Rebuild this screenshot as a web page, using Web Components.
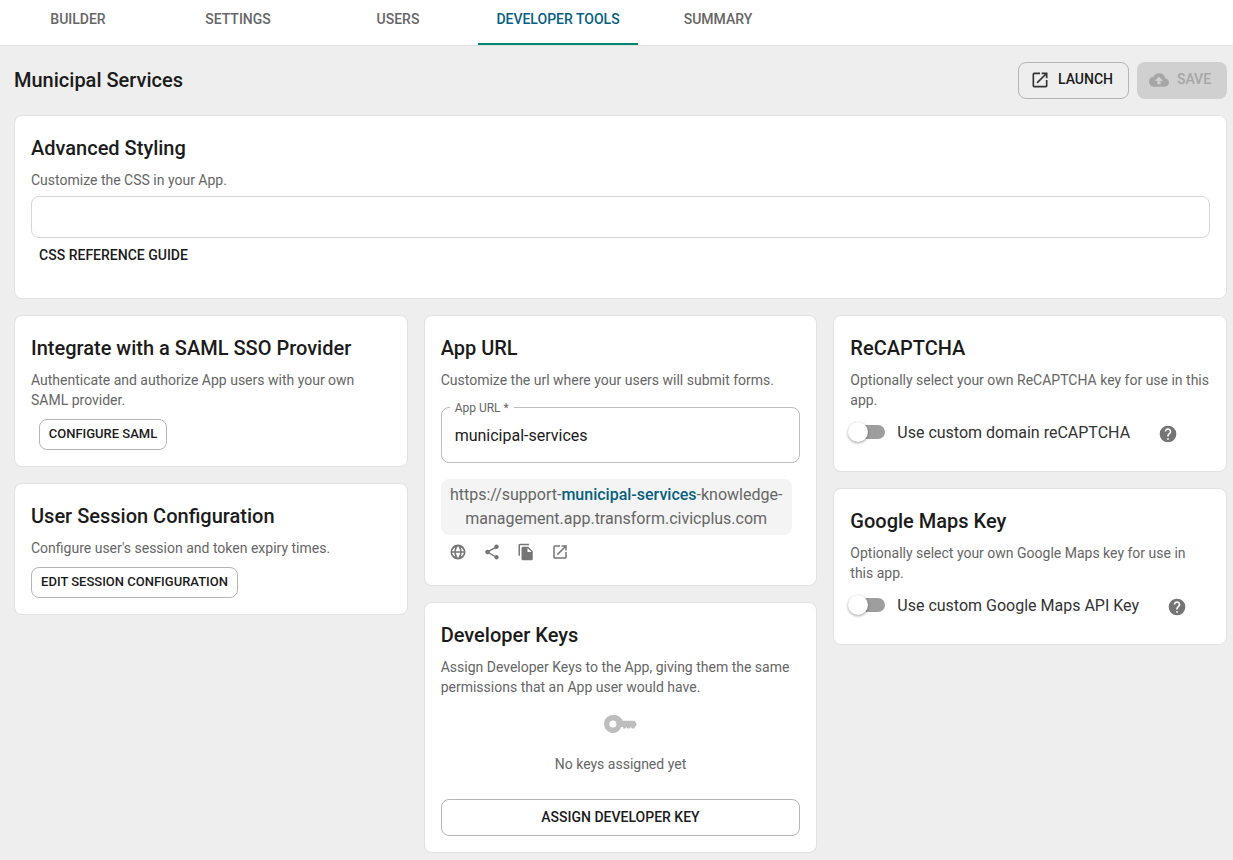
<!DOCTYPE html>
<html lang="en"><head><meta charset="utf-8"><title>Developer Tools</title>
<style>
html,body{margin:0;padding:0;height:860px;overflow:hidden;background:#eee;font-family:Roboto,"Liberation Sans",sans-serif;color:#1b1b1b}
</style></head><body>
<app-tabs>
  <app-tab>BUILDER</app-tab><app-tab>SETTINGS</app-tab><app-tab>USERS</app-tab><app-tab active>DEVELOPER TOOLS</app-tab><app-tab>SUMMARY</app-tab>
</app-tabs>
<app-page>
  <span slot="title">Municipal Services</span>
  <app-button slot="actions" outline icon="launch" style="width:111px;height:37px">LAUNCH</app-button>
  <app-button slot="actions" disabled icon="cloud" style="width:90px;height:37px">SAVE</app-button>

  <app-card slot="top" style="height:184px" heading="Advanced Styling" desc="Customize the CSS in your App.">
    <css-box></css-box>
    <app-button flat style="margin-left:8px;width:149px;height:34px">CSS REFERENCE GUIDE</app-button>
  </app-card>

  <div slot="col1">
    <app-card style="height:152px" heading="Integrate with a SAML SSO Provider">
      <span slot="desc">Authenticate and authorize App users with your own SAML provider.</span>
      <app-button outline small style="margin:9px 0 0 8px;width:128px;height:31px">CONFIGURE SAML</app-button>
    </app-card>
    <app-card style="height:132px" heading="User Session Configuration" desc="Configure user's session and token expiry times.">
      <app-button outline small style="margin-top:9px;width:207px;height:31px">EDIT SESSION CONFIGURATION</app-button>
    </app-card>
  </div>
  <div slot="col2">
    <app-card style="height:271px" heading="App URL" desc="Customize the url where your users will submit forms.">
      <url-field label="App URL *" value="municipal-services"></url-field>
      <url-preview><b>municipal-services</b></url-preview>
    </app-card>
    <app-card style="height:251px" heading="Developer Keys">
      <span slot="desc">Assign Developer Keys to the App, giving them the same permissions that an App user would have.</span>
      <keys-empty>No keys assigned yet</keys-empty>
      <app-button outline style="width:100%;height:37px;display:flex">ASSIGN DEVELOPER KEY</app-button>
    </app-card>
  </div>
  <div slot="col3">
    <app-card style="height:157px" heading="ReCAPTCHA">
      <span slot="desc">Optionally select your own ReCAPTCHA key for use in this app.</span>
      <app-toggle>Use custom domain reCAPTCHA</app-toggle>
    </app-card>
    <app-card style="height:157px" heading="Google Maps Key">
      <span slot="desc">Optionally select your own Google Maps key for use in this app.</span>
      <app-toggle>Use custom Google Maps API Key</app-toggle>
    </app-card>
  </div>
</app-page>
<script>
const ICONS={
 launch:'<path d="M19 19H5V5h7V3H5a2 2 0 0 0-2 2v14a2 2 0 0 0 2 2h14c1.1 0 2-.9 2-2v-7h-2v7zM14 3v2h3.59l-9.83 9.83 1.41 1.41L19 6.41V10h2V3h-7z"/>',
 cloud:'<path d="M19.35 10.04A7.49 7.49 0 0 0 12 4C9.11 4 6.6 5.64 5.35 8.04A5.994 5.994 0 0 0 0 14c0 3.31 2.69 6 6 6h13c2.76 0 5-2.24 5-5 0-2.64-2.05-4.78-4.65-4.96zM14 13v4h-4v-4H7l5-5 5 5h-3z"/>',
 globe:'<path d="M12 2a10 10 0 1 0 0 20 10 10 0 0 0 0-20zm7.93 9h-3.05a15.7 15.7 0 0 0-1.3-5.46A8.03 8.03 0 0 1 19.93 11zM12 4.04c.95 1.3 2.44 3.9 2.87 6.96H9.13C9.56 7.94 11.05 5.34 12 4.04zM4.07 13h3.05c.1 1.95.55 3.8 1.3 5.46A8.03 8.03 0 0 1 4.07 13zm3.05-2H4.07a8.03 8.03 0 0 1 4.35-5.46A15.7 15.7 0 0 0 7.12 11zM12 19.96c-.95-1.3-2.44-3.9-2.87-6.96h5.74c-.43 3.06-1.92 5.66-2.87 6.96zM15.58 18.46c.75-1.66 1.2-3.51 1.3-5.46h3.05a8.03 8.03 0 0 1-4.35 5.46z"/>',
 share:'<path d="M18 16.08c-.76 0-1.44.3-1.96.77L8.91 12.7c.05-.23.09-.46.09-.7s-.04-.47-.09-.7l7.05-4.11c.54.5 1.25.81 2.04.81 1.66 0 3-1.34 3-3s-1.34-3-3-3-3 1.34-3 3c0 .24.04.47.09.7L8.04 9.81C7.5 9.31 6.79 9 6 9c-1.66 0-3 1.34-3 3s1.34 3 3 3c.79 0 1.5-.31 2.04-.81l7.12 4.16c-.05.21-.08.43-.08.65 0 1.61 1.31 2.92 2.92 2.92s2.92-1.31 2.92-2.92-1.31-2.92-2.92-2.92z"/>',
 copy:'<path d="M16 1H4a2 2 0 0 0-2 2v14h2V3h12V1zm-1 4 6 6v10a2 2 0 0 1-2 2H8a2 2 0 0 1-2-2V7a2 2 0 0 1 2-2h7zm-1 7h5.5L14 6.5V12z" />',
 key:'<path fill-rule="evenodd" d="M7 5.7a6.3 6.3 0 1 0 5.9 8.5h1.3v1h1.6l.7-1 .8 1h1.5l.8-1 .8 1h1.6l1.9-3-1.6-2.5h-8.4A6.3 6.3 0 0 0 7 5.7zm0 3.8a2.5 2.5 0 1 1 0 5 2.5 2.5 0 0 1 0-5z"/>',
 help:'<path d="M12 2a10 10 0 1 0 0 20 10 10 0 0 0 0-20zm1 17h-2v-2h2v2zm2.07-7.75-.9.92C13.45 12.9 13 13.5 13 15h-2v-.5c0-1.1.45-2.1 1.17-2.83l1.24-1.26c.37-.36.59-.86.59-1.41 0-1.1-.9-2-2-2s-2 .9-2 2H8c0-2.21 1.79-4 4-4s4 1.79 4 4c0 .88-.36 1.68-.93 2.25z"/>'
};
const svg=(n,s,c)=>`<svg width="${s}" height="${s}" viewBox="0 0 24 24" fill="${c}" aria-hidden="true">${ICONS[n]}</svg>`;
class Base extends HTMLElement{
 constructor(){super();this.attachShadow({mode:'open'})}
 connectedCallback(){this.shadowRoot.innerHTML=this.render()}
}
customElements.define('app-tabs',class extends Base{render(){return `<style>:host{display:block;height:45px;box-sizing:border-box;background:#fff;box-shadow:0 1px 0 #e0e0e0}
.in{display:flex;margin-left:-2px}</style><div class="in"><slot></slot></div>`}});
customElements.define('app-tab',class extends Base{render(){const a=this.hasAttribute('active');return `<style>:host{display:flex;flex:none;width:160px;height:45px;box-sizing:border-box;align-items:center;justify-content:center;padding-bottom:6px;font:500 14px Roboto,sans-serif;color:${a?'#06607f':'#666'};border-bottom:2px solid ${a?'#00876f':'transparent'}}</style><slot></slot>`}});
customElements.define('app-page',class extends Base{render(){return `<style>:host{display:block;padding:0 6px 0 14px}
.head{display:flex;justify-content:space-between;align-items:center;height:70px}
.t{font:500 20px Roboto,sans-serif;color:#1b1b1b}
.acts{display:flex;gap:8px}
.grid{display:grid;grid-template-columns:repeat(3,1fr);gap:16px;margin-top:16px;align-items:start}
::slotted([slot^=col]){display:flex;flex-direction:column;gap:16px}
</style><div class="head"><div class="t"><slot name="title"></slot></div><div class="acts"><slot name="actions"></slot></div></div>
<slot name="top"></slot>
<div class="grid"><slot name="col1"></slot><slot name="col2"></slot><slot name="col3"></slot></div>`}});
customElements.define('app-card',class extends Base{render(){return `<style>:host{display:block;box-sizing:border-box;background:#fff;border:1px solid #e2e2e2;border-radius:8px;padding:20px 16px 0}
h2{margin:0;font:500 20px/24px Roboto,sans-serif;color:#1b1b1b}
.d{margin-top:10px;font:14px/20px Roboto,sans-serif;color:#666}
</style><h2>${this.getAttribute('heading')}</h2><div class="d">${this.getAttribute('desc')||''}<slot name="desc"></slot></div><slot></slot>`}});
customElements.define('app-button',class extends Base{render(){const o=this.hasAttribute('outline'),d=this.hasAttribute('disabled'),i=this.getAttribute('icon'),f=this.hasAttribute('flat');
return `<style>:host{display:inline-flex;box-sizing:border-box;align-items:center;justify-content:center;gap:8px;border-radius:8px;font:500 ${this.hasAttribute('small')?13:14}px Roboto,sans-serif;color:${d?'#a6a6a6':'#1b1b1b'};white-space:nowrap;${o?'border:1px solid #b5b5b5;':''}${d?'background:#d0d0d0;':''}${i?'padding-right:4px;':''}}
svg{display:block;flex:none}.x{display:block;margin-bottom:${f?0:2}px}</style>${i?svg(i,20,d?'#a6a6a6':'#333'):''}<span class="x"><slot></slot></span>`}});
customElements.define('css-box',class extends Base{render(){return `<style>:host{display:block;box-sizing:border-box;height:42px;margin-top:6px;border:1px solid #d5d5d5;border-radius:8px}</style>`}});
customElements.define('url-field',class extends Base{render(){return `<style>:host{position:relative;box-sizing:border-box;height:56px;margin-top:17px;border:1px solid #bdbdbd;border-radius:8px;padding:0 13px;display:flex;align-items:center;font:16px Roboto,sans-serif;color:#1b1b1b}
.l{position:absolute;left:8px;top:-7px;background:#fff;padding:0 5px;font:12px/14px Roboto,sans-serif;color:#666}</style><span class="l">${this.getAttribute('label')}</span>${this.getAttribute('value')}`}});
customElements.define('url-preview',class extends Base{render(){return `<style>:host{display:block;margin-top:16px}
.b{width:351px;box-sizing:border-box;background:#f4f4f4;border-radius:8px;height:56px;padding:4px 0;text-align:center;font:16px/24px Roboto,sans-serif;color:#666}
::slotted(b){font-weight:500;color:#06607f}
.i{display:flex;gap:16px;padding:8px 0 0 8px}svg{display:block;flex:none}</style>
<div class="b">https://support-<slot></slot>-knowledge-<br>management.app.transform.civicplus.com</div>
<div class="i">${['globe','share','copy','launch'].map(n=>svg(n,18,'#757575')).join('')}</div>`}});
customElements.define('keys-empty',class extends Base{render(){return `<style>:host{display:flex;flex-direction:column;align-items:center;height:102px;box-sizing:border-box;padding-top:10px;font:14px/20px Roboto,sans-serif;color:#666}
svg{display:block;margin-bottom:13px}</style>${svg('key',34,'#bdbdbd')}<slot></slot>`}});
customElements.define('app-toggle',class extends Base{render(){return `<style>:host{display:flex;align-items:center;height:24px;margin-top:10px;padding-left:1px;font:16px Roboto,sans-serif;color:#333}
.s{position:relative;width:34px;height:14px;flex:none;margin-right:12px}
.t{position:absolute;left:4px;right:0;top:0;bottom:0;background:#9e9e9e;border-radius:7px}
.k{position:absolute;left:-3px;top:-3px;width:20px;height:20px;border-radius:50%;background:#fff;box-shadow:0 1px 3px rgba(0,0,0,.4)}
.h{margin:4px 0 0 28px;display:block}svg{display:block}</style><span class="s"><span class="t"></span><span class="k"></span></span><slot></slot><span class="h">${svg('help',20,'#757575')}</span>`}});
</script>
</body></html>
